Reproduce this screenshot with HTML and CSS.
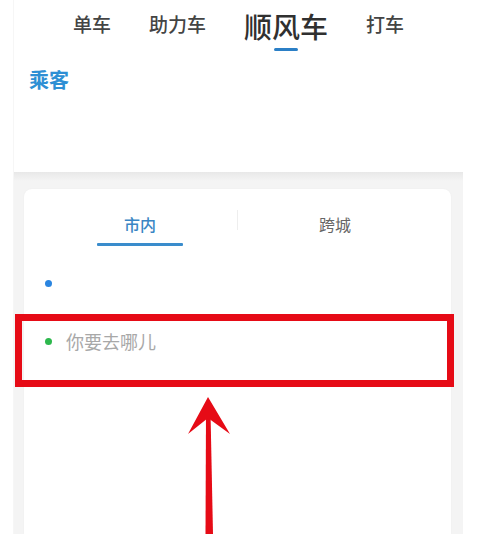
FILE: index.html
```html
<!DOCTYPE html>
<html lang="zh-CN">
  <head>
    <meta charset="UTF-8" />
    <meta name="viewport" content="width=device-width, initial-scale=1.0" />
    <title>顺风车</title>
    <link rel="stylesheet" href="styles.css">
  </head>
  <body>
    <div class="screen">
      <!-- 顶部导航 -->
      <div class="header">
        <div class="top-tabs">
          <span class="tab">单车</span>
          <span class="tab">助力车</span>
          <span class="tab active">
            顺风车
            <i class="tab-bar"></i>
          </span>
          <span class="tab">打车</span>
        </div>
        <div class="role">乘客</div>
      </div>

      <!-- 行程卡片 -->
      <div class="body-area">
        <div class="card">
          <div class="city-tabs">
            <div class="city-tab active">
              <span>市内</span>
              <i class="city-bar"></i>
            </div>
            <div class="divider"></div>
            <div class="city-tab">
              <span>跨城</span>
            </div>
          </div>

          <div class="route-list">
            <div class="route-row">
              <span class="dot dot-start"></span>
            </div>
            <div class="route-row">
              <span class="dot dot-end"></span>
              <span class="placeholder">你要去哪儿</span>
            </div>
          </div>
        </div>
      </div>
    </div>

    <!-- 标注 -->
    <div class="mark-box"></div>
    <svg class="mark-arrow" width="60" height="144" viewBox="0 0 60 144">
      <polygon points="25.5,144 33,144 30.5,22 26,22" fill="#e60b16" />
      <polygon points="28,7 8,44 28,28 50,44" fill="#e60b16" />
    </svg>
  </body>
</html>
```

FILE: styles.css
```css
* {
  box-sizing: border-box;
}

body {
  margin: 0;
  background: #fff;
  font-family: "Noto Sans CJK SC", "Noto Sans", sans-serif;
  overflow: hidden;
}

.screen {
  margin-left: 13px;
  width: 450px;
  height: 534px;
  display: flex;
  flex-direction: column;
  border-left: 1px solid #f6f6f6;
}

.header {
  height: 172px;
  background: #fff;
}

.top-tabs {
  display: flex;
  justify-content: center;
  align-items: flex-start;
  gap: 38px;
  padding-top: 8px;
}

.tab {
  margin-top: 4px;
  font-size: 19px;
  line-height: 24px;
  font-weight: 500;
  color: #444;
}

.tab.active {
  margin-top: 0;
  display: flex;
  flex-direction: column;
  align-items: center;
  font-size: 28px;
  line-height: 36px;
  font-weight: 500;
  color: #303030;
}

.tab-bar {
  display: block;
  width: 24px;
  height: 3px;
  margin-top: 4px;
  border-radius: 2px;
  background: #2b7fc6;
}

.role {
  margin-top: 15px;
  padding-left: 15px;
  font-size: 20px;
  line-height: 28px;
  font-weight: bold;
  color: #2e8fd4;
}

.body-area {
  flex: 1;
  padding: 17px 12px 0 10px;
  background: linear-gradient(#e8e8e8, #f4f4f4 9px);
  display: flex;
}

.card {
  flex: 1;
  background: #fff;
  border-radius: 8px 8px 0 0;
  box-shadow: 0 0 2px rgba(0, 0, 0, 0.04);
}

.city-tabs {
  display: flex;
  align-items: flex-start;
  padding: 24px 19px 0;
}

.city-tab {
  flex: 1;
  display: flex;
  flex-direction: column;
  align-items: center;
  font-size: 16px;
  line-height: 22px;
  color: #666;
}

.city-tab.active {
  color: #3a86c4;
  font-weight: 500;
}

.city-bar {
  display: block;
  width: 86px;
  height: 3px;
  margin-top: 8px;
  background: #3a8ccc;
  border-radius: 1px;
}

.divider {
  width: 1px;
  height: 20px;
  margin-top: -3px;
  background: #eeeeee;
}

.route-list {
  padding-top: 8px;
}

.route-row {
  display: flex;
  align-items: center;
  gap: 14px;
  height: 58px;
  padding-left: 21px;
}

.dot {
  width: 7px;
  height: 7px;
  border-radius: 50%;
}

.dot-start {
  background: #2a85e0;
}

.dot-end {
  background: #2db84d;
}

.placeholder {
  font-size: 18px;
  color: #a8a8a8;
}

.mark-box {
  position: absolute;
  left: 15px;
  top: 314px;
  width: 439px;
  height: 73px;
  border: 7px solid #e60b16;
}

.mark-arrow {
  position: absolute;
  left: 180px;
  top: 390px;
}
```
